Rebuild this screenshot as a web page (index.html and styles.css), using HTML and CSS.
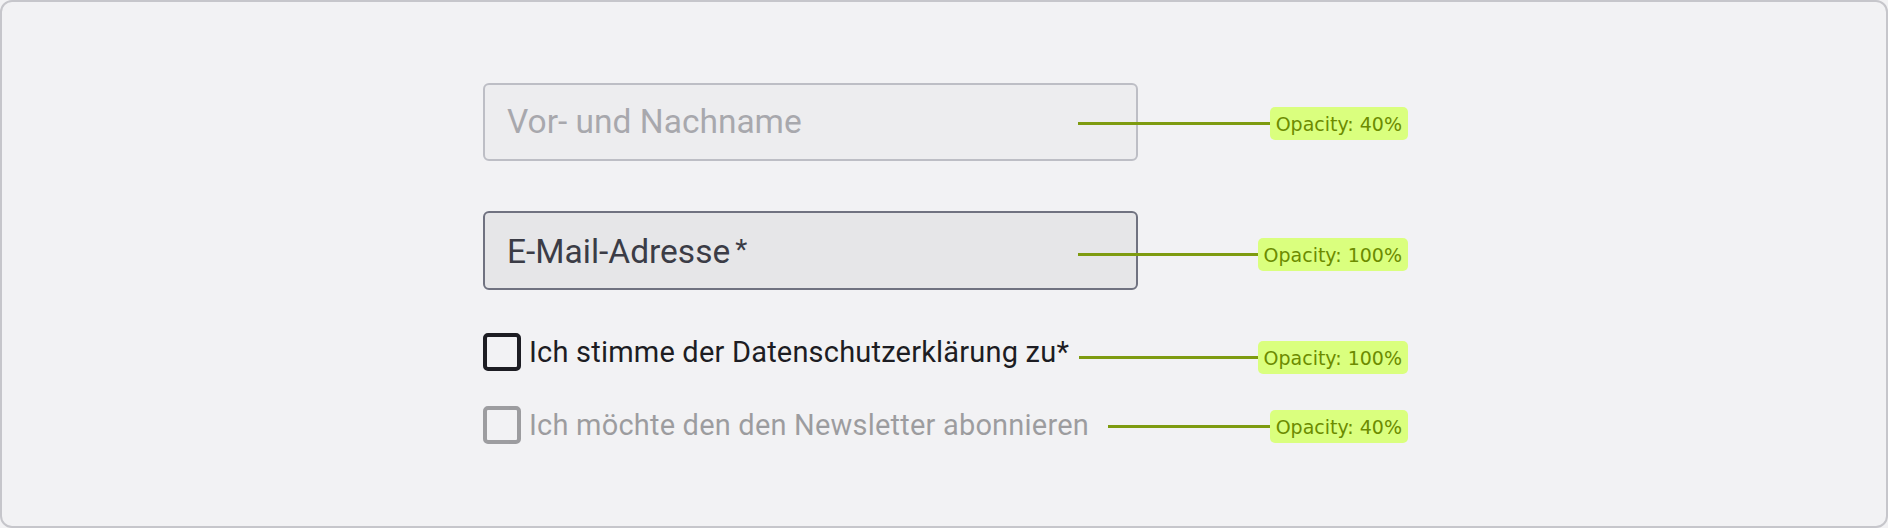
FILE: index.html
```html
<!DOCTYPE html>
<html lang="de">
<head>
<meta charset="utf-8">
<title>Formular Opacity</title>
<link rel="stylesheet" href="styles.css">
</head>
<body>
<div class="frame">
  <div class="stack">
    <div class="row row-name">
      <div class="field is-faded"><span class="field-text">Vor- und Nachname</span></div>
      <div class="note note-field note-name"><span class="note-line"></span><span class="badge">Opacity: 40%</span></div>
    </div>
    <div class="row row-mail">
      <div class="field"><span class="field-text">E-Mail-Adresse<span class="req">*</span></span></div>
      <div class="note note-field note-mail"><span class="note-line"></span><span class="badge">Opacity: 100%</span></div>
    </div>
    <div class="row row-privacy">
      <div class="check"><span class="check-box"></span><span class="check-label">Ich stimme der Datenschutzerklärung zu*</span></div>
      <div class="note note-privacy"><span class="note-line"></span><span class="badge">Opacity: 100%</span></div>
    </div>
    <div class="row row-news">
      <div class="check is-faded"><span class="check-box"></span><span class="check-label">Ich möchte den den Newsletter abonnieren</span></div>
      <div class="note note-news"><span class="note-line"></span><span class="badge">Opacity: 40%</span></div>
    </div>
  </div>
</div>
</body>
</html>
```
FILE: styles.css
```css
* { box-sizing: border-box; }
html, body { margin: 0; padding: 0; }
body { background: #f2f2f4; }

.frame {
  width: 1888px;
  height: 528px;
  border: 2px solid #c6c6cb;
  border-radius: 12px;
  background: #f2f2f4;
  padding: 81px 0 0 3px;
}

.stack {
  width: 925px;
  margin: 0 auto;
  display: flex;
  flex-direction: column;
}

.row {
  display: flex;
  align-items: center;
}
.row-mail { margin-top: 50px; }
.row-privacy { margin-top: 43px; height: 38px; }
.row-news { margin-top: 35px; height: 38px; }

.is-faded { opacity: 0.4; }

.field {
  flex: 0 0 655px;
  height: 78px;
  border: 2px solid #707280;
  border-radius: 6px;
  background: #e6e6e8;
  padding-left: 22px;
  display: flex;
  align-items: center;
}
.row-mail .field { height: 79px; }

.field-text {
  font-family: Roboto, "Liberation Sans", sans-serif;
  font-size: 33.5px;
  line-height: 74px;
  color: #3b3c46;
}
.req {
  margin-left: 5px;
  font-size: 28px;
  vertical-align: 4px;
}

.check {
  display: flex;
  align-items: center;
  gap: 8px;
}
.check-box {
  width: 38px;
  height: 38px;
  border: 4px solid #1d1d23;
  border-radius: 5px;
  flex: 0 0 auto;
}
.check-label {
  font-family: Roboto, "Liberation Sans", sans-serif;
  font-size: 29px;
  letter-spacing: 0.2px;
  line-height: 38px;
  color: #1d1d23;
  white-space: nowrap;
}

.note {
  position: relative;
  z-index: 1;
  flex: 1 1 auto;
  display: flex;
  align-items: center;
}
.note-field { margin-left: -60px; }
.note-name { margin-top: 1px; margin-bottom: -1px; }
.note-mail { margin-top: 4px; margin-bottom: -4px; }
.note-privacy { margin-left: 10px; margin-top: 5px; margin-bottom: -5px; }
.note-news { margin-left: 19px; margin-top: 1px; margin-bottom: -1px; }

.note-line {
  flex: 1 1 auto;
  height: 3px;
  background: #7e9b10;
}
.badge {
  flex: 0 0 auto;
  height: 33px;
  padding: 0 6px;
  border-radius: 5px;
  background: #daff7e;
  color: #6c8b00;
  font-family: "DejaVu Sans", sans-serif;
  font-size: 19px;
  line-height: 34px;
  white-space: nowrap;
}
```
